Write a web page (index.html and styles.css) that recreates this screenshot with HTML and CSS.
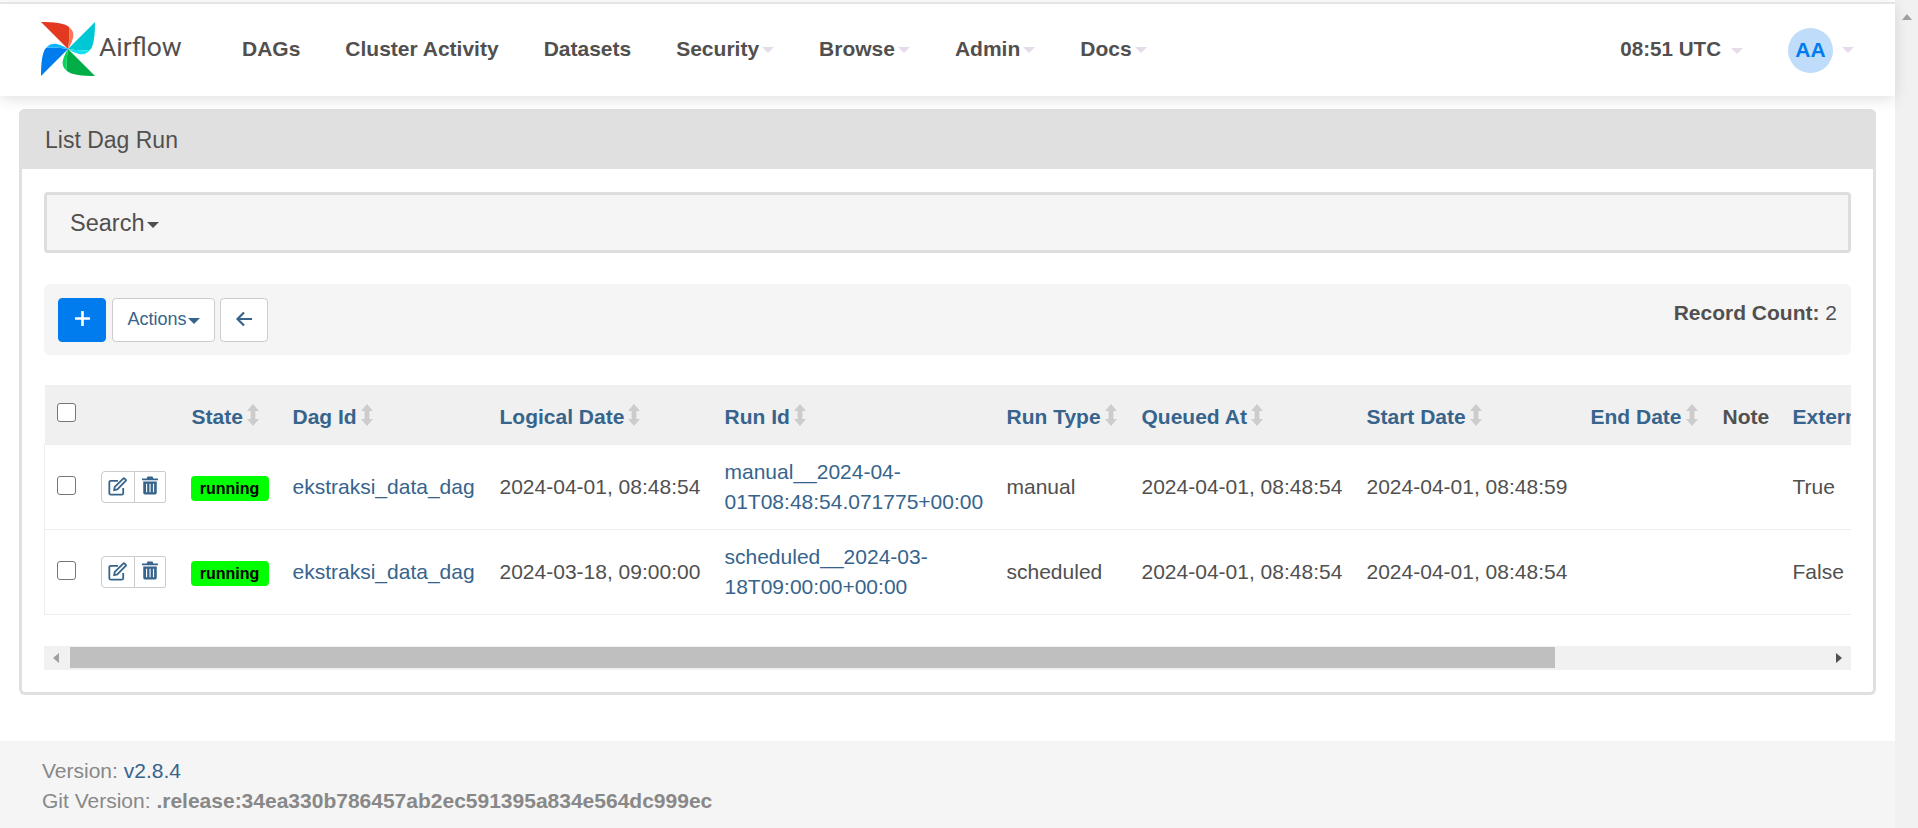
FILE: index.html
```html
<!DOCTYPE html>
<html lang="en">
<head>
    <meta charset="UTF-8">
    <title>List Dag Run - Airflow</title>
    <link rel="stylesheet" href="styles.css">
</head>
<body>
    <div class="page">
        <header class="navbar">
            <a class="brand" href="#">
                <svg class="logo" viewBox="0 0 54 54">
                    <g>
                        <path fill="#e43921" d="M0 0 C12 0 24 1 28 5 C29 12 28 21 27 27 Z"/>
                        <path fill="#ff7557" d="M28 5 C32 8 33 12 32 16 C31 20 29 24 27 27 C28 20 29 12 28 5 Z"/>
                    </g>
                    <g transform="rotate(90 27 27)">
                        <path fill="#00c7d4" d="M0 0 C12 0 24 1 28 5 C29 12 28 21 27 27 Z"/>
                        <path fill="#11e1ee" d="M28 5 C32 8 33 12 32 16 C31 20 29 24 27 27 C28 20 29 12 28 5 Z"/>
                    </g>
                    <g transform="rotate(180 27 27)">
                        <path fill="#00ad46" d="M0 0 C12 0 24 1 28 5 C29 12 28 21 27 27 Z"/>
                        <path fill="#04d659" d="M28 5 C32 8 33 12 32 16 C31 20 29 24 27 27 C28 20 29 12 28 5 Z"/>
                    </g>
                    <g transform="rotate(270 27 27)">
                        <path fill="#017cee" d="M0 0 C12 0 24 1 28 5 C29 12 28 21 27 27 Z"/>
                        <path fill="#0cb6ff" d="M28 5 C32 8 33 12 32 16 C31 20 29 24 27 27 C28 20 29 12 28 5 Z"/>
                    </g>
                </svg>
                <span class="brand-name">Airflow</span>
            </a>
            <nav class="menu">
                <a href="#">DAGs</a>
                <a href="#">Cluster Activity</a>
                <a href="#">Datasets</a>
                <a href="#">Security<i class="caret-pale"></i></a>
                <a href="#">Browse<i class="caret-pale"></i></a>
                <a href="#">Admin<i class="caret-pale"></i></a>
                <a href="#">Docs<i class="caret-pale"></i></a>
            </nav>
            <div class="nav-right">
                <span class="clock">08:51 UTC<i class="caret-pale"></i></span>
                <span class="user"><span class="avatar">AA</span><i class="caret-pale"></i></span>
            </div>
        </header>

        <main class="content">
            <section class="panel">
                <h1 class="panel-heading">List Dag Run</h1>
                <div class="panel-body">
                    <div class="search-box">Search<i class="caret-dark"></i></div>

                    <div class="toolbar">
                        <a class="btn btn-add" href="#">
                            <svg viewBox="0 0 16 16" width="15" height="15"><path fill="#fff" d="M6.600 0h2.800v6.600H16v2.800H9.400V16H6.600V9.400H0V6.600h6.600z"/></svg>
                        </a>
                        <a class="btn btn-actions" href="#">Actions<i class="caret-blue"></i></a>
                        <a class="btn btn-back" href="#">
                            <svg viewBox="0 0 18 16" width="18" height="16"><path fill="none" stroke="#36648c" stroke-width="2.200" d="M17 8H3M9 1.500 2.500 8 9 14.500"/></svg>
                        </a>
                        <span class="record-count"><b>Record Count:</b> 2</span>
                    </div>

                    <div class="table-wrap">
                        <table class="runs">
                            <colgroup>
                                <col class="c-check"><col class="c-act"><col class="c-state"><col class="c-dag">
                                <col class="c-date"><col class="c-run"><col class="c-type"><col class="c-date">
                                <col class="c-start"><col class="c-end"><col class="c-note"><col class="c-ext">
                            </colgroup>
                            <thead>
                                <tr>
                                    <th><span class="check"></span></th>
                                    <th></th>
                                    <th><a href="#">State</a><svg class="sort" viewBox="0 0 12 22"><path d="M6 0l6 7H8.400v8H12l-6 7-6-7h3.600V7H0z"/></svg></th>
                                    <th><a href="#">Dag Id</a><svg class="sort" viewBox="0 0 12 22"><path d="M6 0l6 7H8.400v8H12l-6 7-6-7h3.600V7H0z"/></svg></th>
                                    <th><a href="#">Logical Date</a><svg class="sort" viewBox="0 0 12 22"><path d="M6 0l6 7H8.400v8H12l-6 7-6-7h3.600V7H0z"/></svg></th>
                                    <th><a href="#">Run Id</a><svg class="sort" viewBox="0 0 12 22"><path d="M6 0l6 7H8.400v8H12l-6 7-6-7h3.600V7H0z"/></svg></th>
                                    <th><a href="#">Run Type</a><svg class="sort" viewBox="0 0 12 22"><path d="M6 0l6 7H8.400v8H12l-6 7-6-7h3.600V7H0z"/></svg></th>
                                    <th><a href="#">Queued At</a><svg class="sort" viewBox="0 0 12 22"><path d="M6 0l6 7H8.400v8H12l-6 7-6-7h3.600V7H0z"/></svg></th>
                                    <th><a href="#">Start Date</a><svg class="sort" viewBox="0 0 12 22"><path d="M6 0l6 7H8.400v8H12l-6 7-6-7h3.600V7H0z"/></svg></th>
                                    <th><a href="#">End Date</a><svg class="sort" viewBox="0 0 12 22"><path d="M6 0l6 7H8.400v8H12l-6 7-6-7h3.600V7H0z"/></svg></th>
                                    <th>Note</th>
                                    <th><a href="#">External Trigger</a></th>
                                </tr>
                            </thead>
                            <tbody>
                                <tr>
                                    <td><span class="check"></span></td>
                                    <td>
                                        <div class="row-btns">
                                            <a href="#"><svg viewBox="0 0 20 20" width="19" height="19"><path fill="none" stroke="#36648c" stroke-width="1.900" d="M16 11.500V17a1.600 1.600 0 0 1-1.600 1.600H3A1.600 1.600 0 0 1 1.400 17V5.600A1.600 1.600 0 0 1 3 4h7.500M6.500 13.800l.6-3.400L16 1.600a1 1 0 0 1 1.400 0l1.200 1.200a1 1 0 0 1 0 1.400l-8.800 8.900z"/></svg></a>
                                            <a href="#"><svg class="trash" viewBox="0 0 18 20" width="16" height="19"><path fill="#36648c" fill-rule="evenodd" d="M6.200 0h5.600l1 2H18v2.200H0V2h5.200zM1.400 5.600h15.200v12.500A1.900 1.900 0 0 1 14.700 20H3.300a1.900 1.900 0 0 1-1.900-1.900zM4.500 8v9.500h1.300V8zm3.900 0v9.500h1.300V8zm3.900 0v9.500h1.300V8z"/></svg></a>
                                        </div>
                                    </td>
                                    <td><span class="badge-running">running</span></td>
                                    <td><a href="#">ekstraksi_data_dag</a></td>
                                    <td>2024-04-01, 08:48:54</td>
                                    <td><a href="#">manual__2024-04-01T08:48:54.071775+00:00</a></td>
                                    <td>manual</td>
                                    <td>2024-04-01, 08:48:54</td>
                                    <td>2024-04-01, 08:48:59</td>
                                    <td></td>
                                    <td></td>
                                    <td>True</td>
                                </tr>
                                <tr>
                                    <td><span class="check"></span></td>
                                    <td>
                                        <div class="row-btns">
                                            <a href="#"><svg viewBox="0 0 20 20" width="19" height="19"><path fill="none" stroke="#36648c" stroke-width="1.900" d="M16 11.500V17a1.600 1.600 0 0 1-1.600 1.600H3A1.600 1.600 0 0 1 1.400 17V5.600A1.600 1.600 0 0 1 3 4h7.500M6.500 13.800l.6-3.400L16 1.600a1 1 0 0 1 1.400 0l1.200 1.200a1 1 0 0 1 0 1.400l-8.800 8.900z"/></svg></a>
                                            <a href="#"><svg class="trash" viewBox="0 0 18 20" width="16" height="19"><path fill="#36648c" fill-rule="evenodd" d="M6.200 0h5.600l1 2H18v2.200H0V2h5.200zM1.400 5.600h15.200v12.500A1.900 1.900 0 0 1 14.700 20H3.300a1.900 1.900 0 0 1-1.900-1.900zM4.500 8v9.500h1.300V8zm3.900 0v9.500h1.300V8zm3.900 0v9.500h1.300V8z"/></svg></a>
                                        </div>
                                    </td>
                                    <td><span class="badge-running">running</span></td>
                                    <td><a href="#">ekstraksi_data_dag</a></td>
                                    <td>2024-03-18, 09:00:00</td>
                                    <td><a href="#">scheduled__2024-03-18T09:00:00+00:00</a></td>
                                    <td>scheduled</td>
                                    <td>2024-04-01, 08:48:54</td>
                                    <td>2024-04-01, 08:48:54</td>
                                    <td></td>
                                    <td></td>
                                    <td>False</td>
                                </tr>
                            </tbody>
                        </table>
                    </div>

                    <div class="h-scroll">
                        <span class="arrow-left"></span>
                        <span class="h-thumb"></span>
                        <span class="arrow-right"></span>
                    </div>
                </div>
            </section>
        </main>

        <footer class="footer">
            <div>Version: <a href="#">v2.8.4</a></div>
            <div>Git Version: <b>.release:34ea330b786457ab2ec591395a834e564dc999ec</b></div>
        </footer>
    </div>

    <div class="v-scroll"><span class="arrow-up"></span></div>
</body>
</html>
```

FILE: styles.css
```css
* {
    box-sizing: border-box;
}

html, body {
    height: 100%;
    overflow: hidden;
}

body {
    margin: 0;
    display: flex;
    background-color: #fff;
    color: #51504f;
    font-family: "Liberation Sans", Arial, sans-serif;
    font-size: 21px;
    line-height: 30px;
}

a {
    color: #36648c;
    text-decoration: none;
}

.page {
    flex: 1;
    min-width: 0;
    display: flex;
    flex-direction: column;
    height: 828px;
    padding-top: 2px;
}

/* top bar */
.navbar {
    height: 94px;
    display: flex;
    align-items: center;
    padding-left: 41px;
    border-top: 2px solid #e5e5e5;
    background-color: #fff;
    box-shadow: 0 3px 14px rgba(0, 0, 0, 0.12);
    position: relative;
}

.brand {
    display: flex;
    align-items: center;
    width: 201px;
    margin-top: -3px;
}

.logo {
    width: 54px;
    height: 54px;
    flex: none;
}

.brand-name {
    margin: -3px 0 0 4px;
    font-family: Roboto, "Liberation Sans", sans-serif;
    font-size: 26.500px;
    color: #51504f;
}

.menu {
    display: flex;
    gap: 45px;
    margin-top: -2px;
}

.menu a,
.clock {
    color: #51504f;
    font-weight: bold;
}

.caret-pale {
    display: inline-block;
    margin-left: 3px;
    vertical-align: middle;
    border-top: 6px solid #e6dbe8;
    border-left: 6px solid transparent;
    border-right: 6px solid transparent;
}

.nav-right {
    margin-left: auto;
    display: flex;
    align-items: center;
    padding-right: 41px;
}

.clock {
    margin-top: -2px;
    font-size: 20.600px;
}

.clock .caret-pale {
    margin-left: 10px;
}

.user {
    display: flex;
    align-items: center;
    margin-left: 45px;
}

.user .caret-pale {
    margin-left: 9px;
}

.avatar {
    width: 45px;
    height: 45px;
    display: flex;
    align-items: center;
    justify-content: center;
    border-radius: 50%;
    background-color: #bfdcfa;
    color: #017cee;
    font-weight: bold;
}

/* panel */
.content {
    flex: 1;
    padding: 13px 19px 0 19px;
}

.panel {
    height: 586px;
    border: 3px solid #e0e0e0;
    border-top: none;
    border-radius: 6px;
}

.panel-heading {
    height: 60px;
    margin: 0 -3px;
    padding-left: 26px;
    border-radius: 6px 6px 0 0;
    background-color: #e0e0e0;
    font-size: 23px;
    font-weight: normal;
    line-height: 62px;
}

.panel-body {
    padding: 23px 22px 0;
}

.search-box {
    height: 61px;
    padding-left: 23px;
    border: 3px solid #ddd;
    border-radius: 4px;
    background-color: #f5f5f5;
    font-size: 23.500px;
    line-height: 56px;
}

.caret-dark {
    display: inline-block;
    margin-left: 3px;
    vertical-align: middle;
    border-top: 6px solid #51504f;
    border-left: 6px solid transparent;
    border-right: 6px solid transparent;
}

/* toolbar */
.toolbar {
    height: 71px;
    margin-top: 31px;
    display: flex;
    align-items: center;
    gap: 5px;
    padding: 0 14px;
    border-radius: 6px;
    background-color: #f5f5f5;
}

.btn {
    height: 44px;
    display: flex;
    align-items: center;
    justify-content: center;
    border: 1px solid #ccc;
    border-radius: 4px;
    background-color: #fff;
    font-size: 18px;
}

.btn-add {
    width: 48px;
    margin-right: 1px;
    padding-bottom: 2px;
    border-color: #017cee;
    background-color: #017cee;
}

.btn-actions {
    width: 103px;
    padding-bottom: 2px;
}

.btn-back {
    width: 48px;
    padding-bottom: 2px;
}

.caret-blue {
    display: inline-block;
    margin-left: 1px;
    margin-top: 5px;
    border-top: 6px solid #36648c;
    border-left: 6px solid transparent;
    border-right: 6px solid transparent;
}

.record-count {
    margin: -14px 0 0 auto;
}

/* table */
.table-wrap {
    margin-top: 30px;
    overflow: hidden;
}

.runs {
    width: 1937px;
    table-layout: fixed;
    border-collapse: collapse;
}

.c-check { width: 45px; }
.c-act { width: 90px; }
.c-state { width: 101px; }
.c-dag { width: 207px; }
.c-date { width: 225px; }
.c-run { width: 282px; }
.c-type { width: 135px; }
.c-start { width: 224px; }
.c-end { width: 132px; }
.c-note { width: 70px; }
.c-ext { width: 201px; }

.runs th {
    height: 59px;
    padding: 5px 4px 0 12px;
    background-color: #f0f0f0;
    color: #51504f;
    font-weight: bold;
    text-align: left;
    white-space: nowrap;
}

.runs td {
    height: 85px;
    padding: 0 4px 0 12px;
    border-top: 1px solid #eee;
    border-bottom: 1px solid #eee;
}

.runs td:first-child {
    border-left: 1px solid #eee;
}

.sort {
    width: 12px;
    height: 22px;
    margin-left: 4px;
    vertical-align: -2px;
    fill: #ccc;
}

.check {
    display: block;
    width: 19px;
    height: 19px;
    margin-top: -3px;
    border: 1.500px solid #767676;
    border-radius: 3px;
    background-color: #fff;
}

.runs th .check {
    margin-top: -8px;
}

.row-btns {
    display: inline-flex;
    height: 32px;
    margin-left: -1px;
    vertical-align: middle;
}

.row-btns a {
    display: flex;
    align-items: center;
    justify-content: center;
    height: 32px;
    border: 1px solid #ccc;
}

.row-btns a:first-child {
    width: 34px;
    border-radius: 4px 0 0 4px;
}

.row-btns a:last-child {
    width: 32px;
    margin-left: -1px;
    border-radius: 0 2px 2px 0;
}

.trash {
    margin-top: -3px;
}

.badge-running {
    display: inline-block;
    width: 78px;
    height: 25px;
    margin: 2px 0 0 -1px;
    border-radius: 4px;
    background-color: #0f0;
    color: #000;
    font-size: 16px;
    font-weight: bold;
    line-height: 25px;
    text-align: center;
    vertical-align: middle;
}

/* drawn scrollbars */
.h-scroll {
    height: 24px;
    margin-top: 31px;
    display: flex;
    align-items: center;
    background-color: #f1f1f1;
}

.h-thumb {
    width: 1485px;
    height: 21px;
    margin-left: 11px;
    background-color: #bfbfbf;
}

.arrow-left {
    width: 0;
    margin-left: 9px;
    border-top: 5px solid transparent;
    border-bottom: 5px solid transparent;
    border-right: 6px solid #a0a0a0;
}

.arrow-right {
    margin-left: auto;
    margin-right: 9px;
    border-top: 5px solid transparent;
    border-bottom: 5px solid transparent;
    border-left: 6px solid #505050;
}

.v-scroll {
    width: 23px;
    flex: none;
    height: 828px;
    padding-top: 14px;
    display: flex;
    justify-content: center;
    background-color: #f1f1f1;
}

.arrow-up {
    height: 0;
    border-left: 5px solid transparent;
    border-right: 5px solid transparent;
    border-bottom: 6px solid #a0a0a0;
}

/* footer */
.footer {
    height: 87px;
    padding: 15px 0 0 42px;
    background-color: #f5f5f5;
    color: #888;
}
```
